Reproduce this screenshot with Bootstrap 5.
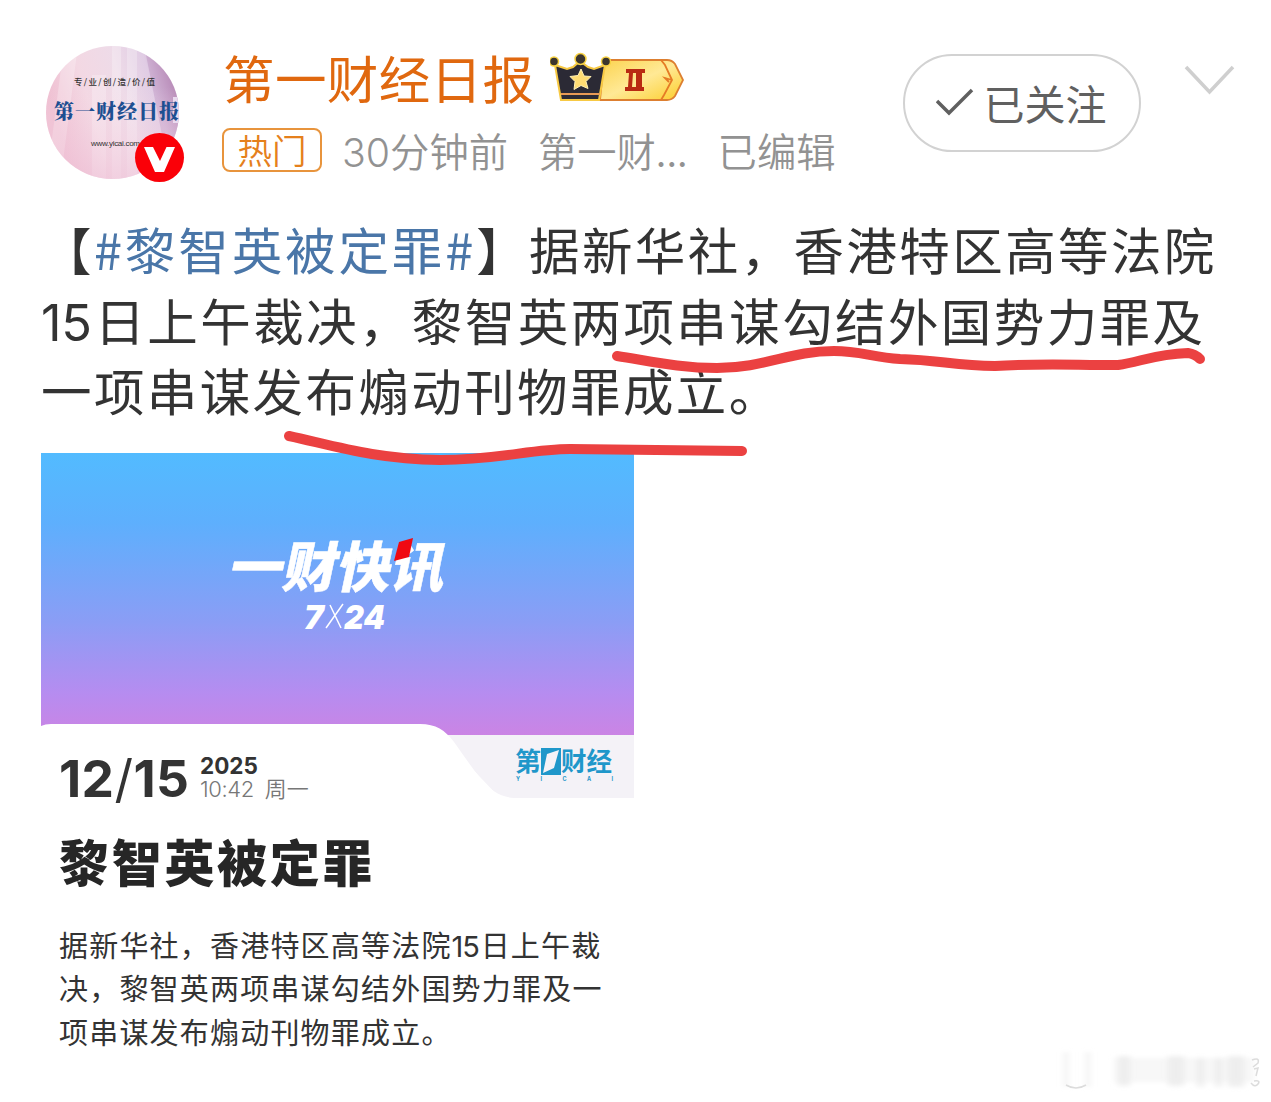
<!DOCTYPE html>
<html lang="zh-CN">

<head>
    <meta charset="UTF-8">
    <meta name="viewport" content="width=device-width, initial-scale=1.0">
    <title>第一财经日报</title>
    <link href="https://cdn.jsdelivr.net/npm/bootstrap@5.3.0/dist/css/bootstrap.min.css" rel="stylesheet">
    <style>
        body {
            font-family: "Noto Sans CJK SC", sans-serif;
            font-weight: 400;
            color: #333;
            background: #fff;
        }

        .post {
            width: 1271px;
            height: 1102px;
            padding: 45px 36px 0 41px;
        }

        .post-head {
            height: 168px;
        }

        .avatar {
            width: 140px;
            height: 140px;
            margin-left: 5px;
        }

        .who {
            margin-left: 36px;
        }

        .nick {
            height: 72px;
            font-size: 51.5px;
            letter-spacing: 0.4px;
            color: #e0680f;
        }

        .nick-name {
            line-height: 64px;
            padding-left: 1px;
        }

        .meta-row {
            height: 44px;
            margin-top: 11px;
            line-height: 44px;
            font-size: 39.3px;
            font-weight: 350;
            color: #929292;
        }

        .hot-tag {
            width: 100px;
            height: 44px;
            margin-right: 20px;
            border: 2px solid #e8943c;
            border-radius: 8px;
            line-height: 39px;
            font-size: 34.5px;
            color: #e5801c;
        }

        .meta-time {
            margin-right: 30px;
        }

        .meta-from {
            margin-right: 30px;
        }

        .num {
            font-family: Inter, sans-serif;
            line-height: 1;
        }

        .follow {
            width: 238px;
            height: 98px;
            margin: 9px 43px 0 auto;
            border: 2px solid #d2d2d2;
            font-size: 41px;
            font-weight: 400;
            color: #606060;
        }

        .follow-text {
            line-height: 60px;
            padding-right: 2px;
            padding-bottom: 2px;
        }

        .body-text {
            height: 240px;
            font-size: 50.5px;
            letter-spacing: 2.4px;
            line-height: 70.5px;
            white-space: nowrap;
        }

        .body-text .num {
            letter-spacing: -0.4px;
            margin-right: 3px;
        }

        .topic {
            color: #4a76a8;
            letter-spacing: 2.9px;
        }

        .news {
            width: 593px;
        }

        .news-top {
            height: 345px;
        }

        .date-row {
            padding-left: 18px;
            margin-top: -48px;
            height: 52px;
        }

        .day {
            font-size: 51.5px;
            font-weight: 700;
            letter-spacing: 0.4px;
            line-height: 56px;
            width: 141px;
            white-space: nowrap;
        }

        .day-slash {
            font-weight: 400;
        }

        .clock {
            font-size: 22px;
            line-height: 22px;
            white-space: nowrap;
        }

        .clock-year {
            font-size: 22.5px;
            padding-top: 5px;
        }

        .clock-time {
            line-height: 18px;
            color: #777;
            font-weight: 350;
        }

        .clock-time .num {
            font-weight: 300;
            letter-spacing: -0.4px;
            margin-right: 11px;
        }

        .news-title {
            margin: 24px 0 0 18px;
            font-size: 50px;
            font-weight: 900;
            letter-spacing: 2.7px;
            line-height: 69px;
            color: #262626;
        }

        .news-text {
            margin: 28px 0 0 18px;
            font-size: 29px;
            letter-spacing: 1.2px;
            line-height: 43.3px;
            white-space: nowrap;
        }

        .news-text .num {
            letter-spacing: -1.2px;
            margin-right: 2px;
        }

        .marker {
            left: 0;
            top: 0;
        }
    </style>
</head>

<body>
    <main class="post position-relative overflow-hidden">
        <header class="post-head d-flex align-items-start">
            <svg class="avatar flex-shrink-0" viewBox="0 0 140 140">
                <defs>
                    <linearGradient id="avatarFill" x1="0" y1="0.3" x2="1" y2="0">
                        <stop offset="0" stop-color="#efc0d2" />
                        <stop offset="0.25" stop-color="#f3d8e3" />
                        <stop offset="0.5" stop-color="#eedbe8" />
                        <stop offset="0.7" stop-color="#e0cce4" />
                        <stop offset="0.85" stop-color="#bf94bc" />
                        <stop offset="1" stop-color="#b78bb7" />
                    </linearGradient>
                    <linearGradient id="avatarFade" x1="0" y1="0" x2="0" y2="1">
                        <stop offset="0.3" stop-color="#f7dce9" stop-opacity="0" />
                        <stop offset="1" stop-color="#eebfd6" stop-opacity="0.6" />
                    </linearGradient>
                    <clipPath id="avatarClip"><circle cx="66.500" cy="67.500" r="66.500" /></clipPath>
                </defs>
                <g clip-path="url(#avatarClip)">
                    <rect width="140" height="140" fill="url(#avatarFill)" />
                    <path d="M66 0h9v140h-9zM81 0h10v140H81zM46 30h14v110H46zM18 0h14L14 140H0z" fill="#fff" opacity="0.25" />
                    <path d="M98 0h42v100h-22z" fill="#a878ae" opacity="0.3" />
                    <rect width="140" height="140" fill="url(#avatarFade)" />
                    <rect x="127" y="52" width="9" height="26" fill="#e9d9ee" />
                    <text x="28" y="40" font-size="8.500" fill="#333" font-weight="500" textLength="81">专/业/创/造/价/值</text>
                    <text x="45" y="101" font-family="Liberation Sans" font-size="8" fill="#333" textLength="49">www.yicai.com</text>
                    <text x="8" y="74" font-family="Noto Serif CJK SC, Noto Sans CJK SC" font-size="20" font-weight="900" fill="#1d4f91" textLength="125">第一财经日报</text>
                </g>
                <circle cx="113.500" cy="112.500" r="24.500" fill="#fa0008" />
                <path d="M98 102h9l7 14 6.500-14h8.500L118 127h-9z" fill="#fff" />
            </svg>

            <div class="who">
                <div class="nick d-flex align-items-start">
                    <span class="nick-name">第一财经日报</span>
                    <svg class="ms-3 mt-1" width="136" height="56" viewBox="550 49 136 56">
                        <defs>
                            <linearGradient id="gold" x1="0" y1="0" x2="1" y2="1">
                                <stop offset="0" stop-color="#fbd34f" />
                                <stop offset="0.5" stop-color="#ffe995" />
                                <stop offset="1" stop-color="#fccd2b" />
                            </linearGradient>
                        </defs>
                        <path d="M604 60h63q5 0 8 4l8 16-8 16q-3 4-8 4h-67z" fill="url(#gold)" stroke="#dd7f30" stroke-width="1.800" />
                        <path d="M661 60l4 5 7 15-8 15-3 5M672 80l-7-2 4 4" fill="none" stroke="#e57b25" stroke-width="1.800" />
                        <path d="M626 69h19v4h-3v14h2v4h-19v-4h3l1-14h-3zM633 73l-1 14h4V73z" fill="#b92a12" fill-rule="evenodd" />
                        <path d="M555 65l12 4 6-2 7-6 8 6 6 2 11-4-6 35h-38z" fill="#2b2a35" stroke="#f7c944" stroke-width="2" />
                        <g fill="#3b352e" stroke="#f7d243" stroke-width="1.500">
                            <circle cx="554" cy="61.500" r="4.500" /><circle cx="580.500" cy="59" r="5.500" /><circle cx="606" cy="61.500" r="4.500" />
                        </g>
                        <path d="M561 94h39" stroke="#e79a55" stroke-width="2" />
                        <path d="M581 69l3 7 7 .5-5 5 2 7-7-3-7 4 1-8-5-5 8-1z" fill="#ffdc73" stroke="#fff0b5" />
                    </svg>
                </div>
                <div class="meta-row d-flex">
                    <span class="hot-tag text-center">热门</span>
                    <span class="meta-time"><span class="num">30</span>分钟前</span>
                    <span class="meta-from">第一财...</span>
                    <span>已编辑</span>
                </div>
            </div>

            <div class="follow rounded-pill d-flex align-items-center justify-content-center flex-shrink-0">
                <svg class="me-2" width="40" height="30" viewBox="0 0 40 30" fill="none" stroke="#606060" stroke-width="3.500">
                    <path d="M1 13l12 12L36 2" />
                </svg>
                <span class="follow-text">已关注</span>
            </div>
            <svg class="flex-shrink-0 mt-3" width="51" height="34" viewBox="0 -1 51 34" fill="none" stroke="#cfcfcf" stroke-width="3.500">
                <path d="M2 5l23.500 25L49 5" />
            </svg>
        </header>

        <div class="body-text">
            <div>【<span class="topic">#黎智英被定罪#</span>】据新华社，香港特区高等法院</div>
            <div><span class="num">15</span>日上午裁决，黎智英两项串谋勾结外国势力罪及</div>
            <div>一项串谋发布煽动刊物罪成立。</div>
        </div>

        <article class="news">
            <svg class="news-top d-block" width="593" viewBox="41 453 593 345">
                <defs>
                    <linearGradient id="sky" x1="0" y1="0" x2="0" y2="1">
                        <stop offset="0" stop-color="#52bbff" />
                        <stop offset="0.25" stop-color="#5eaffd" />
                        <stop offset="0.6" stop-color="#8b9df5" />
                        <stop offset="0.85" stop-color="#b68cf0" />
                        <stop offset="1" stop-color="#cb84e4" />
                    </linearGradient>
                </defs>
                <rect x="41" y="453" width="593" height="283" fill="url(#sky)" />
                <path d="M440 735h194v63H500z" fill="#f4f2f7" />
                <path d="M41 726q4-2 10-2h369c16 0 25 6 34 18 10 14 18 26 27 37 9 11 19 18 33 19H41z" fill="#fff" />
                <g font-weight="900" fill="#fff" transform="translate(0 592) skewX(-12)">
                    <text x="226" y="-5" font-size="54" textLength="216" stroke="#fff" stroke-width="0.500">一财快讯</text>
                </g>
                <path d="M399 542l14-4-4 19-15 4z" fill="#f00912" />
                <g font-family="Inter" font-size="33" font-weight="900" font-style="italic" fill="#fff">
                    <text x="304" y="629">7</text>
                    <text x="344" y="629" textLength="41" lengthAdjust="spacingAndGlyphs">24</text>
                </g>
                <path d="M330 605l11 23M343 604l-17 24" stroke="#fff" stroke-width="1.500" />
                <g fill="#1f97ca" font-weight="700">
                    <text x="515" y="771" font-size="26">第</text>
                    <path d="M541 748h20v27h-20zM547 754l12-4-5 18-11 5z" fill-rule="evenodd" />
                    <text x="561" y="771" font-size="26" textLength="51" lengthAdjust="spacingAndGlyphs">财经</text>
                    <text x="516" y="781" font-family="Inter" font-size="5.500" textLength="97">YICAI</text>
                </g>
            </svg>
            <div class="date-row d-flex position-relative">
                <span class="day num">12<span class="day-slash">/</span>15</span>
                <div class="clock">
                    <div class="clock-year num fw-bold">2025</div>
                    <div class="clock-time"><span class="num">10:42</span>周一</div>
                </div>
            </div>
            <h1 class="news-title">黎智英被定罪</h1>
            <div class="news-text">
                <div>据新华社，香港特区高等法院<span class="num">15</span>日上午裁</div>
                <div>决，黎智英两项串谋勾结外国势力罪及一</div>
                <div>项串谋发布煽动刊物罪成立。</div>
            </div>
        </article>

        <!-- red marker underlines drawn over the text -->
        <svg class="marker position-absolute pe-none" width="1271" height="1102" viewBox="0 0 1271 1102">
            <defs>
                <filter id="soft" x="-10%" y="-20%" width="120%" height="140%">
                    <feGaussianBlur stdDeviation="3 2" />
                </filter>
            </defs>
            <g fill="none" stroke="#eb4141" stroke-width="10" stroke-linecap="round" stroke-linejoin="round">
                <path d="M617 356C650 361 680 368 717 368C765 368 790 351 834 351C860 351 872 357 900 359C940 360 955 366 995 366C1040 363 1070 365 1118 365C1140 362 1155 354 1188 353Q1195 354 1200 359" />
                <path d="M289 436C335 446 375 459 440 460C500 460 530 449 570 449C620 450 680 450 742 451" />
            </g>
            <g filter="url(#soft)" fill="#e6e6e6">
                <path d="M1064 1052h4v35h-4zM1086 1052h4v35h-4z" opacity="0.600" />
                <path d="M1118 1056h12v30h-12zM1168 1056h16v30h-16zM1197 1058h7v29h-7zM1215 1058h7v29h-7zM1228 1056h16v31h-16z" opacity="0.600" />
                <path d="M1114 1058h140v24h-140z" opacity="0.300" />
            </g>
            <path d="M1066 1085q10 6 20 0M1252 1060q8-3 6 3l-5 4M1254 1069l4-1-2 8M1251 1083q4 5 7 1t-4-3" fill="none" stroke="#dcdcdc" stroke-width="1.500" />
        </svg>
    </main>
</body>

</html>
